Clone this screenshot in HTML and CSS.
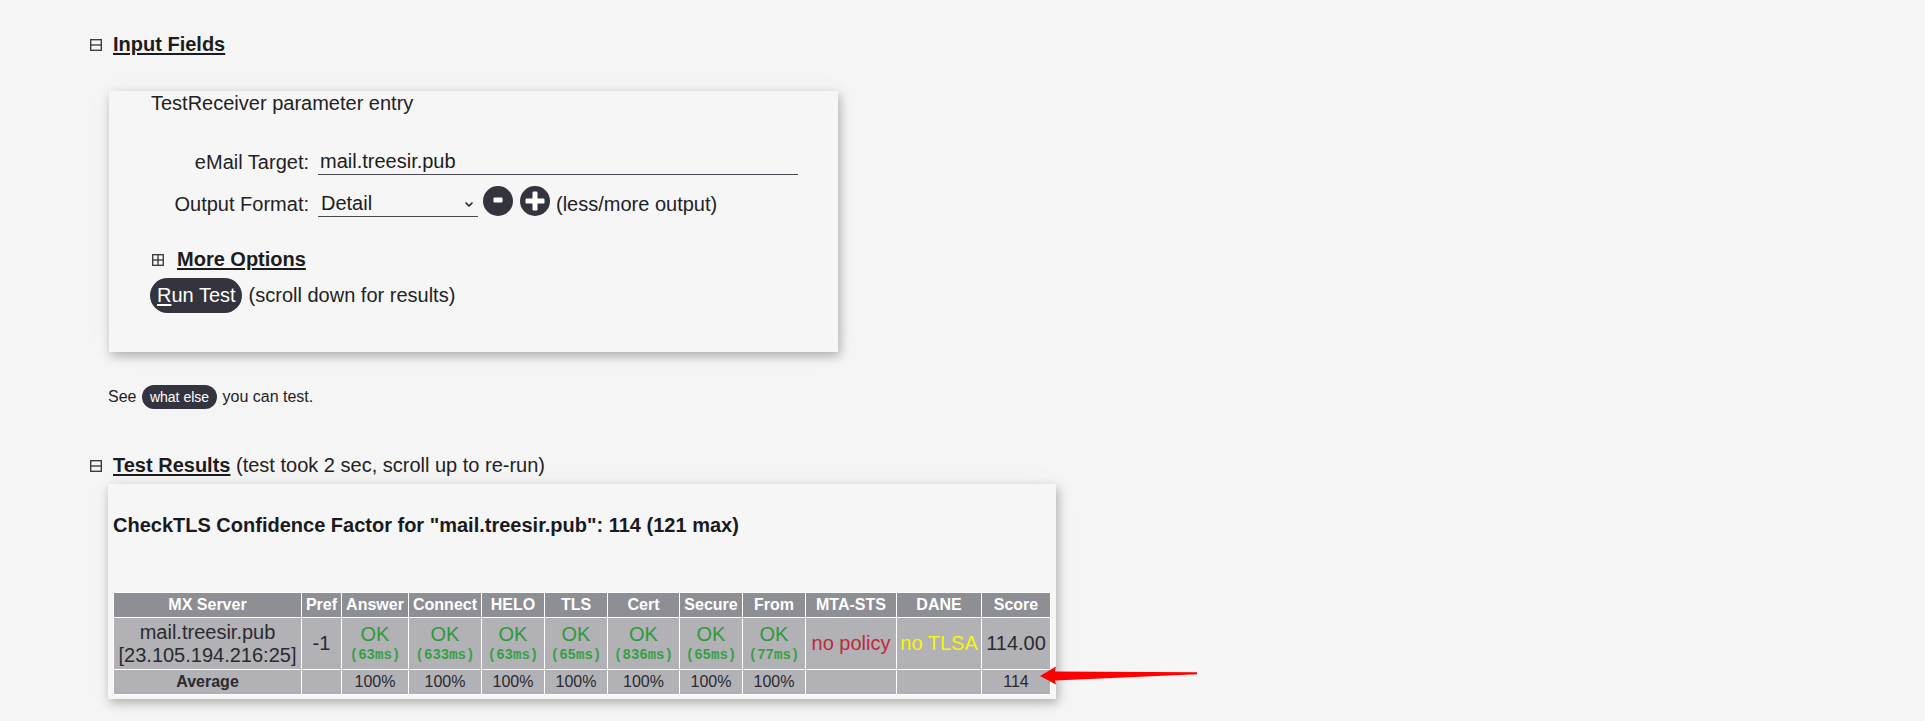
FILE: index.html
```html
<!DOCTYPE html>
<html lang="en">
<head>
<meta charset="utf-8">
<title>CheckTLS TestReceiver</title>
<link rel="stylesheet" href="styles.css">
</head>
<body>
<main class="page">
  <h2 class="sec-head">
    <svg class="toggle" viewBox="0 0 12 12" width="12" height="12"><rect x="0.7" y="0.7" width="10.6" height="10.6" fill="none" stroke="#333" stroke-width="1.3"/><line x1="0.7" y1="6" x2="11.3" y2="6" stroke="#333" stroke-width="1.3"/></svg>
    <a class="sec-title">Input Fields</a>
  </h2>

  <section class="card form-card">
    <div class="form-title">TestReceiver parameter entry</div>
    <div class="form-grid">
      <label class="lbl">eMail Target:</label>
      <div class="field"><input class="txt" type="text" value="mail.treesir.pub"></div>
      <label class="lbl lbl-format">Output Format:</label>
      <div class="field field-format">
        <div class="sel"><span>Detail</span><svg class="chev" viewBox="0 0 8 5" width="8" height="5"><polyline points="1,1 4,4 7,1" fill="none" stroke="#222" stroke-width="1.6" stroke-linecap="round" stroke-linejoin="round"/></svg></div>
        <button class="circ circ-minus" type="button" aria-label="less"><svg viewBox="0 0 30 30" width="30" height="30"><circle cx="15" cy="15" r="15" fill="#34343f"/><rect x="10.5" y="11.5" width="9" height="5" rx="1" fill="#fff"/></svg></button>
        <button class="circ" type="button" aria-label="more"><svg viewBox="0 0 30 30" width="30" height="30"><circle cx="15" cy="15" r="15" fill="#34343f"/><rect x="5.5" y="12.5" width="19" height="5" rx="1.2" fill="#fff"/><rect x="12.5" y="5.5" width="5" height="19" rx="1.2" fill="#fff"/></svg></button>
        <span class="hint">(less/more output)</span>
      </div>
    </div>
    <div class="more">
      <svg class="toggle" viewBox="0 0 12 12" width="12" height="12"><rect x="0.7" y="0.7" width="10.6" height="10.6" fill="none" stroke="#333" stroke-width="1.3"/><line x1="0.7" y1="6" x2="11.3" y2="6" stroke="#333" stroke-width="1.3"/><line x1="6" y1="0.7" x2="6" y2="11.3" stroke="#333" stroke-width="1.3"/></svg>
      <a class="more-title">More Options</a>
    </div>
    <div class="run">
      <button class="btn-run" type="button"><u>R</u>un Test</button>
      <span class="run-note">(scroll down for results)</span>
    </div>
  </section>

  <p class="see">See <span class="pill">what else</span> you can test.</p>

  <h2 class="sec-head sec-head-2">
    <svg class="toggle" viewBox="0 0 12 12" width="12" height="12"><rect x="0.7" y="0.7" width="10.6" height="10.6" fill="none" stroke="#333" stroke-width="1.3"/><line x1="0.7" y1="6" x2="11.3" y2="6" stroke="#333" stroke-width="1.3"/></svg>
    <a class="sec-title">Test Results</a><span class="sec-note">&nbsp;(test took 2 sec, scroll up to re-run)</span>
  </h2>

  <section class="card result-card">
    <h3 class="cf-title">CheckTLS Confidence Factor for "mail.treesir.pub": 114 (121 max)</h3>
    <table class="results">
      <colgroup>
        <col class="c-mx"><col class="c-pref"><col class="c-answer"><col class="c-connect"><col class="c-helo"><col class="c-tls"><col class="c-cert"><col class="c-secure"><col class="c-from"><col class="c-mta"><col class="c-dane"><col class="c-score">
      </colgroup>
      <thead>
        <tr><th>MX Server</th><th>Pref</th><th>Answer</th><th>Connect</th><th>HELO</th><th>TLS</th><th>Cert</th><th>Secure</th><th>From</th><th>MTA-STS</th><th>DANE</th><th>Score</th></tr>
      </thead>
      <tbody>
        <tr class="r-main">
          <td class="mx">mail.treesir.pub<br>[23.105.194.216:25]</td>
          <td class="big">-1</td>
          <td><span class="ok">OK</span><span class="ms">(63ms)</span></td>
          <td><span class="ok">OK</span><span class="ms">(633ms)</span></td>
          <td><span class="ok">OK</span><span class="ms">(63ms)</span></td>
          <td><span class="ok">OK</span><span class="ms">(65ms)</span></td>
          <td><span class="ok">OK</span><span class="ms">(836ms)</span></td>
          <td><span class="ok">OK</span><span class="ms">(65ms)</span></td>
          <td><span class="ok">OK</span><span class="ms">(77ms)</span></td>
          <td class="big bad">no policy</td>
          <td class="big warn">no TLSA</td>
          <td class="big">114.00</td>
        </tr>
        <tr class="r-avg">
          <td class="avg-lbl">Average</td><td></td><td>100%</td><td>100%</td><td>100%</td><td>100%</td><td>100%</td><td>100%</td><td>100%</td><td></td><td></td><td>114</td>
        </tr>
      </tbody>
    </table>
  </section>

  <svg class="arrow" viewBox="0 0 170 30" width="170" height="30"><polygon points="5,16 21,6.5 20,11.5 162,12.2 162,14.2 20,20.5 21,24.5" fill="#ff0000"/></svg>
</main>
</body>
</html>
```

FILE: styles.css
```css
* { box-sizing: border-box; }

html, body {
  margin: 0;
  padding: 0;
  background: #f5f5f5;
}

body {
  font-family: "Liberation Sans", Arial, Helvetica, sans-serif;
  font-size: 20px;
  color: #222226;
}

.page {
  position: relative;
  padding: 32px 0 0 90px;
  min-height: 721px;
}

/* section headings */
.sec-head {
  display: flex;
  align-items: center;
  margin: 0;
  font-size: 20px;
  line-height: 24px;
  font-weight: bold;
}

.toggle {
  display: block;
  flex: none;
  width: 12px;
  height: 12px;
  margin-right: 11px;
  margin-top: 1px;
}

.sec-title {
  color: #1c1c20;
  text-decoration: underline;
  text-underline-offset: 2px;
}

.sec-note {
  font-weight: normal;
}

.sec-head-2 {
  margin-top: 44px;
}

/* cards */
.card {
  background: #f6f6f6;
  box-shadow: 2px 4px 10px rgba(0, 0, 0, 0.28), 0 0 30px rgba(0, 0, 0, 0.03);
}

.form-card {
  width: 729px;
  margin: 35px 0 0 19px;
  padding: 0 0 39px 42px;
}

.form-title {
  line-height: 24px;
}

.form-grid {
  display: grid;
  grid-template-columns: 158px auto;
  column-gap: 9px;
  row-gap: 11px;
  margin-top: 34px;
  align-items: end;
}

.lbl {
  text-align: right;
  line-height: 26px;
  white-space: nowrap;
}

.field {
  display: flex;
  align-items: flex-end;
}

.txt {
  width: 480px;
  height: 26px;
  padding: 0 2px;
  border: none;
  border-bottom: 1px solid #4a4a52;
  background: transparent;
  font-family: inherit;
  font-size: 20px;
  color: #1c1c20;
  outline: none;
}

.sel {
  display: flex;
  align-items: center;
  justify-content: space-between;
  width: 160px;
  height: 26px;
  padding: 0 5px 0 3px;
  border-bottom: 1px solid #4a4a52;
  line-height: 25px;
  color: #1c1c20;
}

.chev {
  display: block;
  margin-top: 2px;
}

.circ {
  display: block;
  width: 30px;
  height: 30px;
  padding: 0;
  margin: 0 0 1px 7px;
  border: none;
  background: none;
  cursor: pointer;
}

.circ-minus {
  margin-left: 5px;
}

.circ svg {
  display: block;
}

.hint {
  margin-left: 6px;
  line-height: 26px;
}

.more {
  display: flex;
  align-items: center;
  margin: 30px 0 0 1px;
  line-height: 24px;
  font-weight: bold;
}

.more .toggle {
  margin-right: 13px;
  margin-top: 2px;
}

.more-title {
  text-decoration: underline;
  text-underline-offset: 2px;
  color: #1c1c20;
}

.run {
  display: flex;
  align-items: center;
  margin-top: 7px;
}

.btn-run {
  height: 35px;
  padding: 0 6px 0 7px;
  margin-left: -1px;
  border: none;
  border-radius: 18px;
  background: #34343f;
  color: #fff;
  font-family: inherit;
  font-size: 20px;
  line-height: 35px;
  cursor: pointer;
}

.btn-run u {
  text-underline-offset: 2px;
}

.run-note {
  margin-left: 7px;
}

/* see what else */
.see {
  margin: 33px 0 0 18px;
  font-size: 16px;
  line-height: 24px;
}

.pill {
  display: inline-block;
  height: 24px;
  padding: 0 8px;
  border-radius: 12px;
  background: #34343f;
  color: #fff;
  font-size: 14px;
  line-height: 24px;
  margin: 0 1px;
}

/* results card */
.result-card {
  width: fit-content;
  margin: 7px 0 0 18px;
  padding: 29px 5px 4px 5px;
}

.cf-title {
  margin: 0;
  font-size: 20px;
  line-height: 24px;
  font-weight: bold;
  color: #1a1a1e;
}

.results {
  margin-top: 55px;
  width: 937px;
  table-layout: fixed;
  border-collapse: collapse;
  text-align: center;
}

.c-mx { width: 188px; }
.c-pref { width: 40px; }
.c-answer { width: 67px; }
.c-connect { width: 73px; }
.c-helo { width: 63px; }
.c-tls { width: 63px; }
.c-cert { width: 72px; }
.c-secure { width: 63px; }
.c-from { width: 63px; }
.c-mta { width: 91px; }
.c-dane { width: 85px; }
.c-score { width: 69px; }

.results th,
.results td {
  border: 1px solid #ffffff;
  padding: 0;
  white-space: nowrap;
  overflow: hidden;
}

.results th {
  height: 25px;
  background: #8e8e95;
  color: #ffffff;
  font-size: 16px;
  font-weight: bold;
  line-height: 20px;
}

.results td {
  background: #b1b1b6;
  color: #2a2a30;
}

.results .r-main td {
  height: 52px;
  font-size: 20px;
  line-height: 23px;
}

.results .r-avg td {
  height: 25px;
  font-size: 16px;
  line-height: 20px;
}

.results .avg-lbl {
  font-weight: bold;
}

.results .ok {
  display: block;
  color: #2f9a3c;
  font-size: 20px;
  line-height: 22px;
}

.results .ms {
  display: block;
  color: #36a046;
  font-family: "Liberation Mono", "Courier New", monospace;
  font-size: 14px;
  font-weight: bold;
  line-height: 20px;
}

.results .bad { color: #c0283c; }
.results .warn { color: #f7f700; }

/* annotation arrow */
.arrow {
  position: absolute;
  left: 1035px;
  top: 660px;
  display: block;
}
```
